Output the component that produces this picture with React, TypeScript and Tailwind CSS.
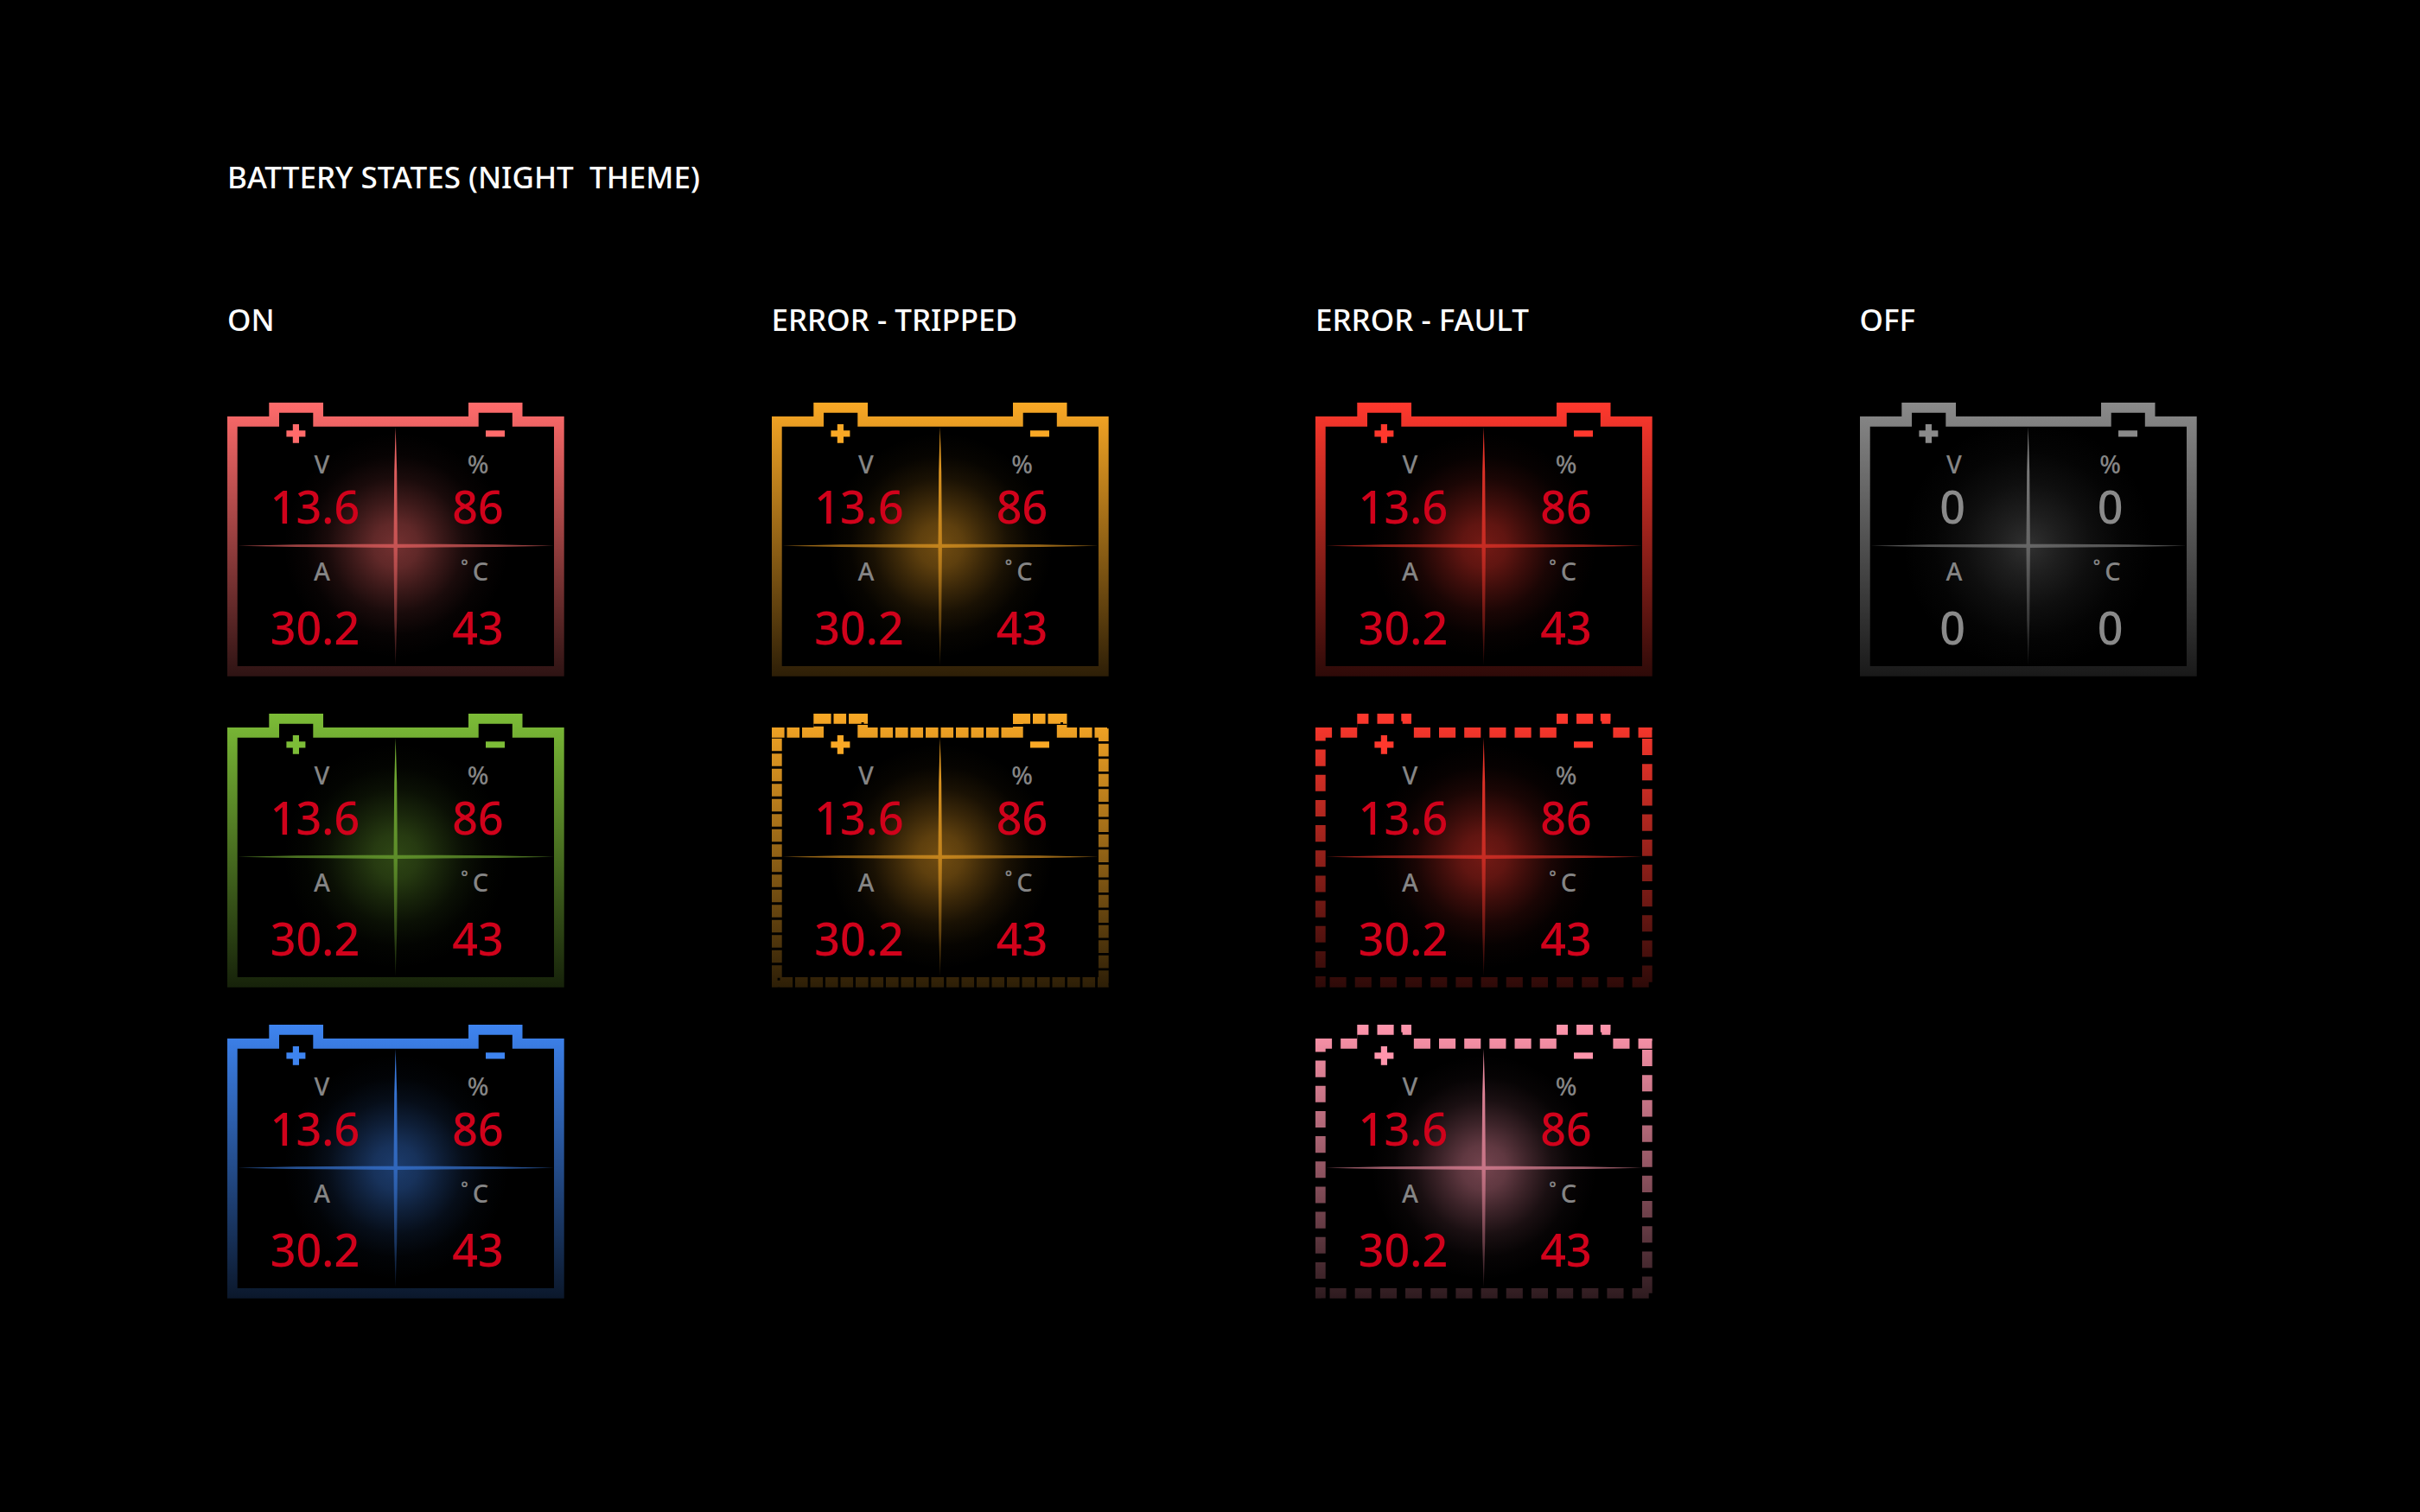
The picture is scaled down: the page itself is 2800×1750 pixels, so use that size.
import React from "react";

type Outline = "solid" | "tight" | "loose";

interface Battery {
  id: string;
  label: string;
  color: string;
  outline: Outline;
  glow?: number;
  off?: boolean;
}

interface Column {
  title: string;
  batteries: Battery[];
}

const columns: Column[] = [
  {
    title: "ON",
    batteries: [
      { id: "on-coral", label: "Battery on, coral", color: "#ff6b6b", outline: "solid" },
      { id: "on-green", label: "Battery on, green", color: "#7cbc37", outline: "solid", glow: 0.37 },
      { id: "on-blue", label: "Battery on, blue", color: "#3e84f0", outline: "solid" },
    ],
  },
  {
    title: "ERROR - TRIPPED",
    batteries: [
      { id: "trip-solid", label: "Battery tripped", color: "#f9a825", outline: "solid" },
      { id: "trip-dash", label: "Battery tripped, dashed", color: "#f9a825", outline: "tight" },
    ],
  },
  {
    title: "ERROR - FAULT",
    batteries: [
      { id: "fault-solid", label: "Battery fault", color: "#ff382d", outline: "solid" },
      { id: "fault-dash", label: "Battery fault, dashed", color: "#ff382d", outline: "loose" },
      { id: "fault-pink", label: "Battery fault, pink", color: "#ff95ac", outline: "loose" },
    ],
  },
  {
    title: "OFF",
    batteries: [
      { id: "off", label: "Battery off", color: "#8a8a8a", outline: "solid", glow: 0.35, off: true },
    ],
  },
];

const dashes: Record<Outline, string | undefined> = {
  solid: undefined,
  tight: "14.6 2.9",
  loose: "19.1 10.07",
};

const shell = "M0 16H48.3V0H111V16H279V0H341.5V16H389.7V316.7H0Z";

const cross =
  "M194.7 28L196.2 80L196.9 166L196.2 252L194.7 304L193.2 252L192.5 166L193.2 80Z" +
  "M12 165.7L80 164.3L194.7 163.5L310 164.3L378 165.7L310 167.1L194.7 167.9L80 167.1Z";

function BatteryDrawing({ battery }: { battery: Battery }) {
  const { id, color, outline, off } = battery;
  const glow = battery.glow ?? 0.45;
  return (
    <svg
      viewBox="0 0 390 317"
      width="390"
      height="317"
      className="absolute inset-0"
      role="img"
      aria-label={battery.label}
    >
      <defs>
        <linearGradient id={`${id}-fade`} gradientUnits="userSpaceOnUse" x1="0" y1="0" x2="0" y2="317">
          <stop offset="0" stopColor={color} />
          <stop offset="1" stopColor={color} stopOpacity="0.18" />
        </linearGradient>
        <linearGradient id={`${id}-cross`} gradientUnits="userSpaceOnUse" x1="0" y1="28" x2="0" y2="304">
          <stop offset="0" stopColor={color} />
          <stop offset="1" stopColor={color} stopOpacity="0.2" />
        </linearGradient>
        <radialGradient id={`${id}-glow`} gradientUnits="userSpaceOnUse" cx="195" cy="165" r={off ? 145 : 130}>
          {off ? (
            <>
              <stop offset="0" stopColor={color} stopOpacity={glow} />
              <stop offset="0.25" stopColor={color} stopOpacity={glow * 0.62} />
              <stop offset="0.5" stopColor={color} stopOpacity={glow * 0.3} />
              <stop offset="0.75" stopColor={color} stopOpacity={glow * 0.09} />
              <stop offset="1" stopColor={color} stopOpacity="0" />
            </>
          ) : (
            <>
              <stop offset="0" stopColor={color} stopOpacity={glow} />
              <stop offset="0.2" stopColor={color} stopOpacity={glow * 0.84} />
              <stop offset="0.4" stopColor={color} stopOpacity={glow * 0.52} />
              <stop offset="0.6" stopColor={color} stopOpacity={glow * 0.23} />
              <stop offset="0.8" stopColor={color} stopOpacity={glow * 0.06} />
              <stop offset="1" stopColor={color} stopOpacity="0" />
            </>
          )}
        </radialGradient>
        <clipPath id={`${id}-clip`}>
          <path d={shell} />
        </clipPath>
      </defs>
      <rect x="12" y="28" width="366" height="277" fill={`url(#${id}-glow)`} />
      <path d={cross} fill={`url(#${id}-cross)`} />
      <path
        d={shell}
        fill="none"
        stroke={`url(#${id}-fade)`}
        strokeWidth="23.4"
        strokeDasharray={dashes[outline]}
        clipPath={`url(#${id}-clip)`}
      />
      <path
        d="M75.8 25H83V32.2H90.4V39.4H83V46.8H75.8V39.4H68.4V32.2H75.8ZM299 32.2H321V39.4H299Z"
        fill={color}
      />
    </svg>
  );
}

function BatteryCard({ battery }: { battery: Battery }) {
  const off = battery.off;
  const values = off ? ["0", "0", "0", "0"] : ["13.6", "86", "30.2", "43"];
  const unit = "text-[29px] leading-10 font-medium text-[#858585]";
  const value = off
    ? "text-[52px] leading-[58px] font-medium text-[#8a8a8a]"
    : "text-[52px] leading-[58px] font-medium text-[#d0021b]";
  const leftValue = off ? `${value} pl-3` : value;
  return (
    <article className="relative h-[317px] w-[390px]">
      <BatteryDrawing battery={battery} />
      <div className="relative grid grid-cols-[203px_174px] pt-[51px] text-center">
        <span className={`${unit} pl-4`}>V</span>
        <span className={unit}>%</span>
        <span className={leftValue}>{values[0]}</span>
        <span className={value}>{values[1]}</span>
        <span className={`${unit} mt-[26px] pl-4`}>A</span>
        <span className={`${unit} mt-[26px] pr-2`}>{"˚\u2006C"}</span>
        <span className={`${leftValue} mt-4`}>{values[2]}</span>
        <span className={`${value} mt-4`}>{values[3]}</span>
      </div>
    </article>
  );
}

export default function App() {
  return (
    <main className="min-h-screen bg-black pt-[181px] pr-[19px] pb-20 pl-[263px] font-['Noto_Sans',sans-serif] text-white">
      <h1 className="text-[35px] leading-12 font-medium whitespace-pre">BATTERY STATES (NIGHT  THEME)</h1>
      <div className="mt-[117px] grid grid-cols-4">
        {columns.map((column) => (
          <section key={column.title}>
            <h2 className="text-[35px] leading-12 font-medium">{column.title}</h2>
            <div className="mt-[72px] flex flex-col gap-[43px]">
              {column.batteries.map((battery) => (
                <BatteryCard key={battery.id} battery={battery} />
              ))}
            </div>
          </section>
        ))}
      </div>
    </main>
  );
}
